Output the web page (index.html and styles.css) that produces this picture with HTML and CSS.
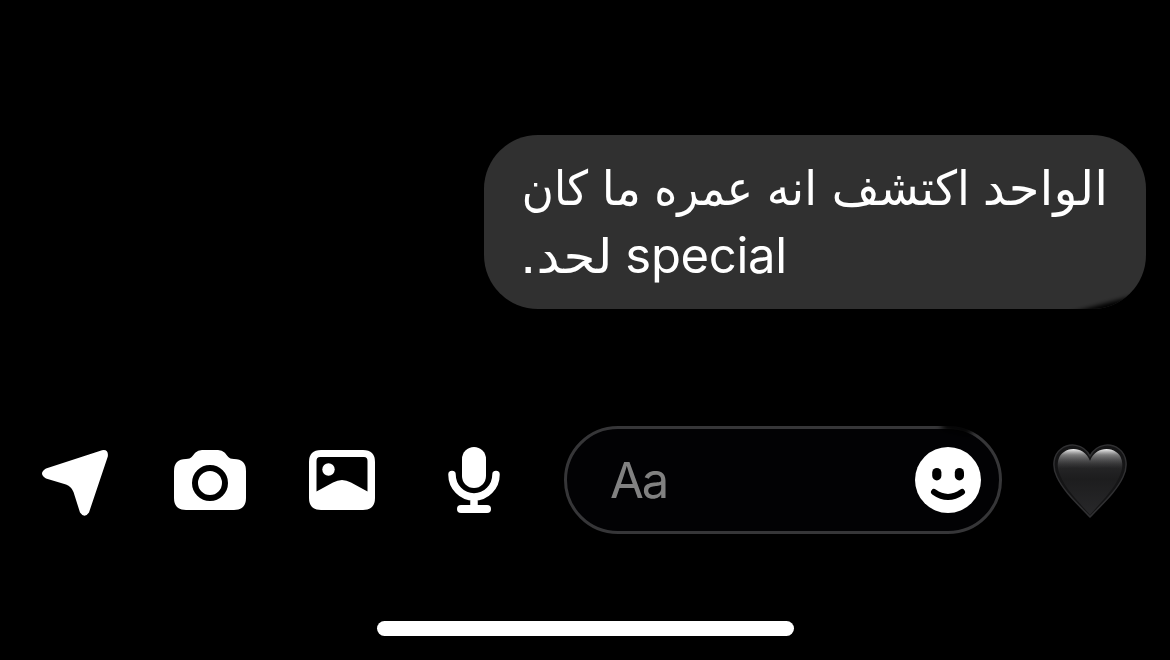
FILE: index.html
```html
<!DOCTYPE html>
<html lang="ar">
<head>
<meta charset="utf-8">
<title>Chat</title>
<link rel="stylesheet" href="styles.css">
</head>
<body>
<main class="thread">
  <div class="bubble" dir="rtl">
    <p class="line first"><span class="word wahid">الواحد</span> <span class="word iktashaf">اكتشف</span> <span class="word innu">انه</span> <span class="word omro">عمره</span> <span class="word ma">ما</span> <span class="word kan">كان</span></p>
    <p class="line second"><span class="latin">special</span> <span class="lahad">لحد.</span></p>
  </div>
</main>
<footer class="composer">
  <svg class="icon send" viewBox="40 446 72 72"><path d="M102 450.200Q108.800 449 107.800 456.500L89 512.500Q84.500 519 80 512.500L73.500 492Q71.500 486.500 66 484.500L46 478.500Q38 473.500 46 468.500Z"/></svg>
  <svg class="icon camera" viewBox="174 446 72 72"><path d="M186 459C192 459 192 456 195.500 452.500Q198 450 202 450H218Q222 450 224.500 452.500C228 456 228 459 234 459Q246 459 246 471V498Q246 510 234 510H186Q174 510 174 498V471Q174 459 186 459Z"/><circle cx="210" cy="483" r="15" class="ring"/></svg>
  <svg class="icon photo" viewBox="306 446 72 72"><path fill-rule="evenodd" d="M321 450H363Q375 450 375 462V498Q375 510 363 510H321Q309 510 309 498V462Q309 450 321 450ZM320 457Q316.500 457 316.500 461V491.500L333 482.500Q342 477.500 351 482.500L367.500 491.500V461Q367.500 457 364 457Z"/><circle cx="328.500" cy="469.500" r="6.200"/></svg>
  <svg class="icon mic" viewBox="438 446 72 72"><rect x="462" y="447" width="24" height="41" rx="12"/><path class="stand" d="M452 474.500A22 22.500 0 0 0 496 474.500M474 498V508"/><rect x="457" y="505" width="34" height="8" rx="4"/></svg>
  <div class="field">
    <span class="placeholder">Aa</span>
    <svg class="smile" viewBox="0 0 66 66"><circle cx="33" cy="33" r="33"/><rect class="eye" x="17.200" y="21" width="9.200" height="12.400" rx="4.600"/><rect class="eye" x="39.800" y="21" width="9.200" height="12.400" rx="4.600"/><path class="mouth" d="M19 45Q33 55 47 45"/></svg>
  </div>
  <svg class="heart" viewBox="0 0 74 76">
    <defs>
      <linearGradient id="body" x2="0" y2="1"><stop offset="0" stop-color="#303032"/><stop offset=".45" stop-color="#1d1d1e"/><stop offset="1" stop-color="#28282a"/></linearGradient>
      <linearGradient id="shine" x2="0" y2="1"><stop offset="0" stop-color="#fff" stop-opacity=".95"/><stop offset=".3" stop-color="#ccc" stop-opacity=".5"/><stop offset="1" stop-color="#555" stop-opacity="0"/></linearGradient>
    </defs>
    <path class="shell" d="M37 12C30-1 16-1 8 5C0 11-1 23 4 33C11 48 25 60 37 73C49 60 63 48 70 33C75 23 74 11 66 5C58-1 44-1 37 12Z"/>
    <path fill="url(#body)" d="M37 17C32 3 17 3 11 8C4 13 3 22 7 31C13 46 27 59 37 71C47 59 61 46 67 31C71 22 70 13 63 8C57 3 42 3 37 17Z"/>
    <path fill="url(#shine)" d="M37 17C32 3 17 3 11 8C6 11 4 17 5 25Q22 22 37 25Q52 22 69 25C70 17 68 11 63 8C57 3 42 3 37 17Z"/>
  </svg>
</footer>
<div class="home"></div>
</body>
</html>
```
FILE: styles.css
```css
*{box-sizing:border-box}
body{margin:0;width:1170px;height:660px;overflow:hidden;background:#000;display:flex;flex-direction:column;align-items:center;font-family:Inter,"DejaVu Sans",sans-serif}
.thread{width:100%;height:426px;padding:135px 24px 0;display:flex;justify-content:flex-end;align-items:flex-start}
.bubble{position:relative;overflow:hidden;width:662px;height:174px;padding:19px 38px 0 36px;border-radius:54px;background:#303030;color:#fff;text-align:left}
/* soft shadow along the lower right corner */
.bubble::after{content:"";position:absolute;right:-8px;bottom:-13px;width:84px;height:20px;background:#000;filter:blur(2px);transform:rotate(-15deg)}
.line{margin:0;height:68px;line-height:68px;font-size:48px;font-family:"DejaVu Sans",sans-serif;white-space:nowrap}
.first{display:flex}
.word{flex:none;text-align:right;transform-origin:right center}
.wahid{width:138px;transform:scaleX(1.035)}
.iktashaf{width:153px;transform:scaleX(.965)}
.innu{width:64px;transform:scaleX(.96)}
.omro{width:112px;transform:scaleX(.915)}
.ma{width:53px;transform:scaleX(.97)}
.kan{width:66px;transform:scaleX(.91)}
.latin{font-family:Inter,sans-serif;font-size:49px;letter-spacing:-.3px;margin-left:4px}
.lahad{display:inline-block;transform:scaleX(1.075);transform-origin:left center}
.composer{width:100%;height:108px;display:flex;align-items:center;padding-left:40px}
.icon{width:72px;height:72px;flex:none;fill:#fff;margin-top:4px}
.camera{margin-left:62px}
.photo,.mic{margin-left:60px}
.ring{stroke:#000;stroke-width:6}
.stand{fill:none;stroke:#fff;stroke-width:7.500;stroke-linecap:round}
.field{position:relative;width:438px;height:108px;margin-left:54px;flex:none;border:3px solid #363638;border-radius:54px;background:#020204;display:flex;align-items:center;justify-content:space-between;padding:0 18px 0 43px}
/* faded stretch of the outline */
.field::after{content:"";position:absolute;right:27px;top:-6px;width:30px;height:10px;background:#000;filter:blur(3px);transform:rotate(12deg)}
.placeholder{font-size:49px;color:#818181;letter-spacing:-2px}
.smile{width:66px;height:66px;fill:#fff}
.smile .eye{fill:#000}
.smile .mouth{fill:none;stroke:#000;stroke-width:6;stroke-linecap:round}
.heart{width:74px;height:76px;flex:none;margin-left:51px;margin-top:3px}
.shell{fill:#151516;stroke:#303032;stroke-width:1.500}
.home{width:417px;height:15px;margin-top:87px;border-radius:8px;background:#fff}
```
